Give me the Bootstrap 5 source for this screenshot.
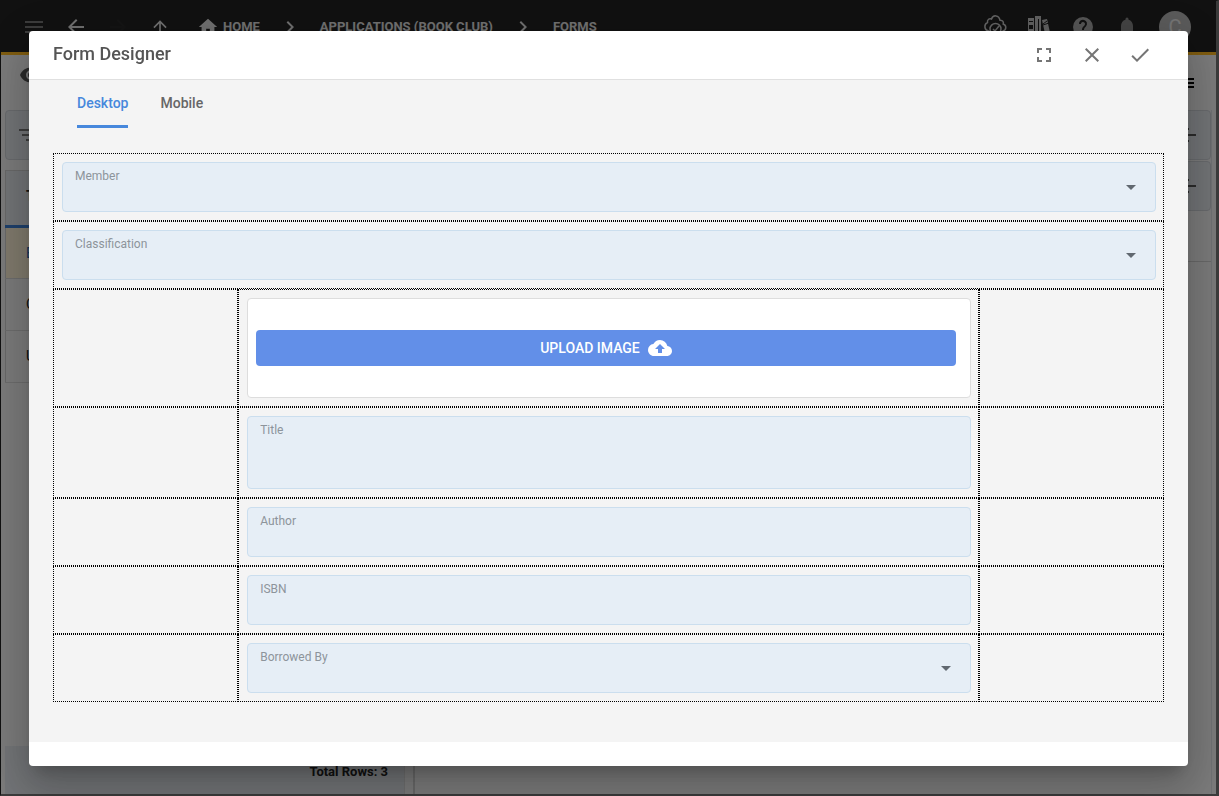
<!DOCTYPE html>
<html lang="en">
<head>
<meta charset="utf-8">
<meta name="viewport" content="width=device-width, initial-scale=1">
<title>Form Designer</title>
<link href="https://cdn.jsdelivr.net/npm/bootstrap@5.3.0/dist/css/bootstrap.min.css" rel="stylesheet">
<style>
body { font-family: Roboto, "Liberation Sans", sans-serif; font-size: 14px; color: #212121; background: #f5f5f5; }
svg { display: block; flex: none; }
svg:not([fill]) { fill: currentColor; }
.app-frame { border: solid #222; border-width: 1px 3px 2px 1px; border-right-color: #777; border-bottom-color: #777; }
.app-bar { height: 54px; background: #222; border-bottom: 3px solid #ffb921; color: #e0e0e0; padding: 0 25px 0 12px; }
.bar-btn { width: 42px; padding: 0; border: 0; color: inherit; background: none; display: flex; justify-content: center; }
.tool-group .bar-btn { width: 44px; color: #aaa; }
.crumb { color: #e0e0e0; font-size: 13px; font-weight: 700; text-decoration: none; text-transform: uppercase; }
.user-dot { width: 32px; height: 32px; margin-left: 10px; background: #b5b5b5; color: #e8e8e8; font-size: 20px; border-radius: 50%; }
.tool-strip { height: 55px; padding: 0 22px 0 18px; }
.side-pane { flex: 0 0 400px; border-right: 1px solid #ddd; }
.splitter { flex: 0 0 10px; border-right: 2px solid #d0d0d0; }
.bluish { background: #e3e7ec; }
.filter-box { height: 50px; border: 1px solid #cfd3d8; border-radius: 4px; padding: 0 12px; }
.side-pane .filter-box { margin-bottom: 10px; color: #777; }
.side-view .filter-box { margin-bottom: 1px; color: #555; }
.app-table { border: 1px solid #d0d0d0; border-radius: 4px 4px 0 0; font-size: 14px; }
.app-table th { height: 56px; border-bottom: 3px solid #3c7fd6; padding: 0 0 4px 20px; font-weight: 700; }
.app-table td { height: 52px; border-bottom: 1px solid #d8d8d8; padding: 0 0 0 20px; }
.app-table .picked td { background: #fff3d8; color: #1f5fae; }
.pane-foot { height: 48px; padding: 4px 16px 0; font-size: 13px; font-weight: 700; }
.line-row { height: 50px; border-bottom: 1px solid #d0d0d0; }
.dim { background: rgba(0,0,0,.5); }
.designer { max-width: none; margin: 31px 31px 30px 29px; }
.designer .modal-content { border: 0; border-radius: 4px; box-shadow: 0 11px 15px -7px rgba(0,0,0,.2), 0 24px 38px 3px rgba(0,0,0,.14), 0 9px 46px 8px rgba(0,0,0,.12); }
.designer .modal-header { height: 49px; padding: 0 24px; border-bottom: 1px solid #e0e0e0; }
.designer .modal-title { font-size: 18px; line-height: 24px; font-weight: 500; color: #555; padding-bottom: 2px; }
.head-btn { width: 48px; height: 48px; border: 0; background: none; color: #757575; padding: 0; display: flex; align-items: center; justify-content: center; }
.designer .modal-body { background: #f4f4f4; padding: 0 24px 40px; }
.view-tabs { gap: 32px; padding: 0 24px; margin-bottom: 25px; }
.view-tabs .nav-link { height: 48px; padding: 0; border-bottom: 3px solid transparent; border-radius: 2px 2px 0 0; color: #666; font-weight: 500; font-size: 14px; line-height: 46px; }
.view-tabs .nav-link.active { color: #4788dc; border-color: #4788dc; }
.cell { border: 1px dotted #000; padding: 8px 7px 8px 8px; }
.field { background: #e6eef6; border: 1px solid #cbdeee; border-radius: 4px; height: 50px; }
.field-tall { height: 73px; }
.field label { font-size: 12px; line-height: 18px; color: #8d949b; padding: 4px 12px 0; }
.field input, .field select, .field textarea { flex: 1; min-height: 0; width: 100%; border: 0; background: none; padding: 0 12px; appearance: none; resize: none; outline: 0; font-size: 14px; }
.drop-mark { right: 12px; color: #616870; pointer-events: none; }
.upload-card { height: 100px; background: #fff; border: 1px solid #ddd; border-radius: 4px; padding: 0 14px 0 8px; }
.upload-btn { height: 36px; background: #628fe8; color: #fff; border: 0; border-radius: 4px; font-size: 14px; font-weight: 500; }
.designer .modal-footer { height: 24px; padding: 0; border: 0; }
</style>
</head>
<body>
<div class="app-frame min-vh-100 d-flex flex-column" aria-hidden="true">
  <header class="app-bar d-flex align-items-center">
    <button class="bar-btn" aria-label="Menu"><svg width="24" height="24" viewBox="0 0 24 24" opacity=".45"><path d="M3 18h18v-2H3zm0-5h18v-2H3zm0-7v2h18V6z"/></svg></button>
    <button class="bar-btn" aria-label="Back"><svg width="24" height="24" viewBox="0 0 24 24"><path d="M20 11H7.830l5.590-5.590L12 4l-8 8 8 8 1.410-1.410L7.830 13H20z"/></svg></button>
    <button class="bar-btn" aria-label="Forward"><svg width="24" height="24" viewBox="0 0 24 24" opacity=".03"><path d="M4 13h12.170l-5.590 5.590L12 20l8-8-8-8-1.410 1.410L16.170 11H4z"/></svg></button>
    <button class="bar-btn" aria-label="Up"><svg width="20" height="20" viewBox="0 0 24 24"><path d="M4 12l1.410 1.410L11 7.830V20h2V7.830l5.580 5.590L20 12l-8-8z"/></svg></button>
    <nav class="d-flex align-items-center" aria-label="Breadcrumb">
      <svg class="ms-3 me-1" width="22" height="22" viewBox="0 0 24 24"><path d="M10 20v-6h4v6h5v-8h3L12 3 2 12h3v8z"/></svg>
      <a class="crumb" href="#">Home</a>
      <svg class="mx-3" width="28" height="24" viewBox="-2 0 28 24"><path d="M10 6L8.590 7.410 13.170 12l-4.580 4.590L10 18l6-6z"/></svg>
      <a class="crumb" href="#">Applications (Book Club)</a>
      <svg class="mx-3" width="28" height="24" viewBox="-2 0 28 24"><path d="M10 6L8.590 7.410 13.170 12l-4.580 4.590L10 18l6-6z"/></svg>
      <a class="crumb" href="#">Forms</a>
    </nav>
    <div class="tool-group d-flex align-items-center ms-auto">
      <button class="bar-btn" aria-label="Cloud status"><svg width="24" height="26" viewBox="0 0 24 26" fill="none" stroke="#c8c8c8" stroke-width="1.500"><path d="M6.500 17H5.500a4.500 4.500 0 0 1-1-8.500C4 5.500 6.500 4 8.500 5 10 .5 16 .8 17 6.200c3-.2 3.800 2.300 3.200 3.800C24 11.500 23.500 16.500 19.500 17"/><circle cx="12.500" cy="15" r="5.500"/><path d="M10 15l2 2 4-5"/></svg></button>
      <button class="bar-btn" aria-label="Library"><svg width="24" height="26" viewBox="0 0 24 26" fill="#c0c0c0"><path d="M1 4h6v20H1zM8 2h6v22H8zM15 6l5-1 4 18-5 1z"/><path d="M2 7h4v1H2zM2 11h4v4H2zM11 5h1v18h-1z" fill="#222"/><path d="M16 10l4-3M16 11l6-2" fill="none" stroke="#222"/></svg></button>
      <button class="bar-btn" aria-label="Help"><svg width="24" height="24" viewBox="0 0 24 24"><path d="M12 2a10 10 0 1 0 0 20 10 10 0 0 0 0-20zm1 17h-2v-2h2zm2.070-7.750l-.9.920C13.450 12.900 13 13.500 13 15h-2v-.5c0-1.100.450-2.100 1.170-2.830l1.240-1.260A2 2 0 1 0 10 9H8a4 4 0 1 1 7.070 2.250z"/></svg></button>
      <button class="bar-btn" aria-label="Notifications"><svg width="24" height="24" viewBox="0 0 24 24" fill="#888"><path d="M12 22a2 2 0 0 0 2-2h-4c0 1.100.890 2 2 2zm6-6v-5c0-3.070-1.640-5.640-4.500-6.320V4a1.500 1.500 0 0 0-3 0v.680C7.630 5.360 6 7.920 6 11v5l-2 2v1h16v-1z"/></svg></button>
      <span class="user-dot d-flex align-items-center justify-content-center">C</span>
    </div>
  </header>
  <div class="tool-strip d-flex align-items-center justify-content-between">
    <svg class="mb-3" width="24" height="24" viewBox="0 0 24 24" fill="#555"><path d="M12 4.500C7 4.500 2.730 7.610 1 12c1.730 4.390 6 7.500 11 7.500s9.270-3.110 11-7.500c-1.730-4.390-6-7.500-11-7.500zM12 17a5 5 0 1 1 0-10 5 5 0 0 1 0 10zm0-8a3 3 0 1 0 0 6 3 3 0 0 0 0-6z"/></svg>
    <svg width="16" height="24" viewBox="0 0 16 24" fill="#000"><path d="M0 7h16v2H0zM0 11h16v2H0zM0 15h16v2H0z"/></svg>
  </div>
  <main class="d-flex flex-grow-1 ps-1 pe-1">
    <section class="side-pane d-flex flex-column">
      <div class="filter-box bluish d-flex align-items-center"><svg width="24" height="24" viewBox="0 0 24 24"><path d="M1 6h22v2H1zM4 11h16v2H4zM8 16h8v2H8z"/></svg></div>
      <table class="app-table w-100">
        <thead><tr><th class="bluish">T</th></tr></thead>
        <tbody><tr class="picked"><td>B</td></tr><tr><td>C</td></tr><tr><td>U</td></tr></tbody>
      </table>
      <div class="pane-foot bluish mt-auto d-flex align-items-center justify-content-end">Total Rows: 3</div>
    </section>
    <div class="splitter"></div>
    <section class="side-view flex-grow-1 border-end">
      <div class="filter-box bluish d-flex align-items-center justify-content-end"><svg width="24" height="24" viewBox="0 0 24 24"><path d="M2 11h20v2H2zM12 5h3v2h-3zM12 17h3v2h-3z"/></svg></div>
      <div class="filter-box bluish d-flex align-items-center justify-content-end"><svg width="24" height="24" viewBox="0 0 24 24"><path d="M2 11h20v2H2zM12 5h3v2h-3zM12 17h3v2h-3z"/></svg></div>
      <div class="line-row"></div>
    </section>
  </main>
</div>

<div class="modal d-block dim" role="dialog" aria-modal="true" aria-labelledby="dlgTitle">
  <div class="modal-dialog designer">
    <div class="modal-content">
      <div class="modal-header">
        <h1 class="modal-title" id="dlgTitle">Form Designer</h1>
        <div class="d-flex">
          <button class="head-btn" aria-label="Full screen"><svg width="24" height="24" viewBox="0 0 24 24"><path d="M7 14H5v5h5v-2H7zM5 10h2V7h3V5H5zm12 7h-3v2h5v-5h-2zM14 5v2h3v3h2V5z"/></svg></button>
          <button class="head-btn" aria-label="Close"><svg width="24" height="24" viewBox="0 0 24 24"><path d="M19 6.410L17.590 5 12 10.590 6.410 5 5 6.410 10.590 12 5 17.590 6.410 19 12 13.410 17.590 19 19 17.590 13.410 12z"/></svg></button>
          <button class="head-btn" aria-label="Save"><svg width="24" height="24" viewBox="0 0 24 24"><path d="M9 16.170L4.830 12l-1.420 1.410L9 19 21 7l-1.410-1.410z"/></svg></button>
        </div>
      </div>
      <div class="modal-body">
        <nav class="nav view-tabs">
          <a class="nav-link active" href="#" aria-current="page">Desktop</a>
          <a class="nav-link" href="#">Mobile</a>
        </nav>
        <form>
          <div class="row g-0"><div class="col-12 cell">
            <div class="field d-flex flex-column position-relative"><label for="member">Member</label><select id="member"></select><svg class="drop-mark position-absolute top-50 translate-middle-y" width="24" height="24" viewBox="0 0 24 24"><path d="M7 10l5 5 5-5z"/></svg></div>
          </div></div>
          <div class="row g-0"><div class="col-12 cell">
            <div class="field d-flex flex-column position-relative"><label for="classification">Classification</label><select id="classification"></select><svg class="drop-mark position-absolute top-50 translate-middle-y" width="24" height="24" viewBox="0 0 24 24"><path d="M7 10l5 5 5-5z"/></svg></div>
          </div></div>
          <div class="row g-0">
            <div class="col-2 cell"></div>
            <div class="col-8 cell"><div class="upload-card d-flex align-items-center">
              <button type="button" class="upload-btn w-100 d-flex align-items-center justify-content-center gap-2">UPLOAD IMAGE <svg width="24" height="24" viewBox="0 0 24 24"><path d="M19.350 10.040A7.490 7.490 0 0 0 12 4C9.110 4 6.600 5.640 5.350 8.040A5.994 5.994 0 0 0 0 14c0 3.310 2.690 6 6 6h13c2.760 0 5-2.240 5-5 0-2.640-2.050-4.780-4.650-4.960zM14 13v4h-4v-4H7l5-5 5 5z"/></svg></button>
            </div></div>
            <div class="col-2 cell"></div>
          </div>
          <div class="row g-0">
            <div class="col-2 cell"></div>
            <div class="col-8 cell"><div class="field field-tall d-flex flex-column"><label for="title">Title</label><textarea id="title"></textarea></div></div>
            <div class="col-2 cell"></div>
          </div>
          <div class="row g-0">
            <div class="col-2 cell"></div>
            <div class="col-8 cell"><div class="field d-flex flex-column"><label for="author">Author</label><input type="text" id="author"></div></div>
            <div class="col-2 cell"></div>
          </div>
          <div class="row g-0">
            <div class="col-2 cell"></div>
            <div class="col-8 cell"><div class="field d-flex flex-column"><label for="isbn">ISBN</label><input type="text" id="isbn"></div></div>
            <div class="col-2 cell"></div>
          </div>
          <div class="row g-0">
            <div class="col-2 cell"></div>
            <div class="col-8 cell"><div class="field d-flex flex-column position-relative"><label for="borrower">Borrowed By</label><select id="borrower"></select><svg class="drop-mark position-absolute top-50 translate-middle-y" width="24" height="24" viewBox="0 0 24 24"><path d="M7 10l5 5 5-5z"/></svg></div></div>
            <div class="col-2 cell"></div>
          </div>
        </form>
      </div>
      <div class="modal-footer"></div>
    </div>
  </div>
</div>
<script src="https://cdn.jsdelivr.net/npm/bootstrap@5.3.0/dist/js/bootstrap.bundle.min.js"></script>
</body>
</html>
